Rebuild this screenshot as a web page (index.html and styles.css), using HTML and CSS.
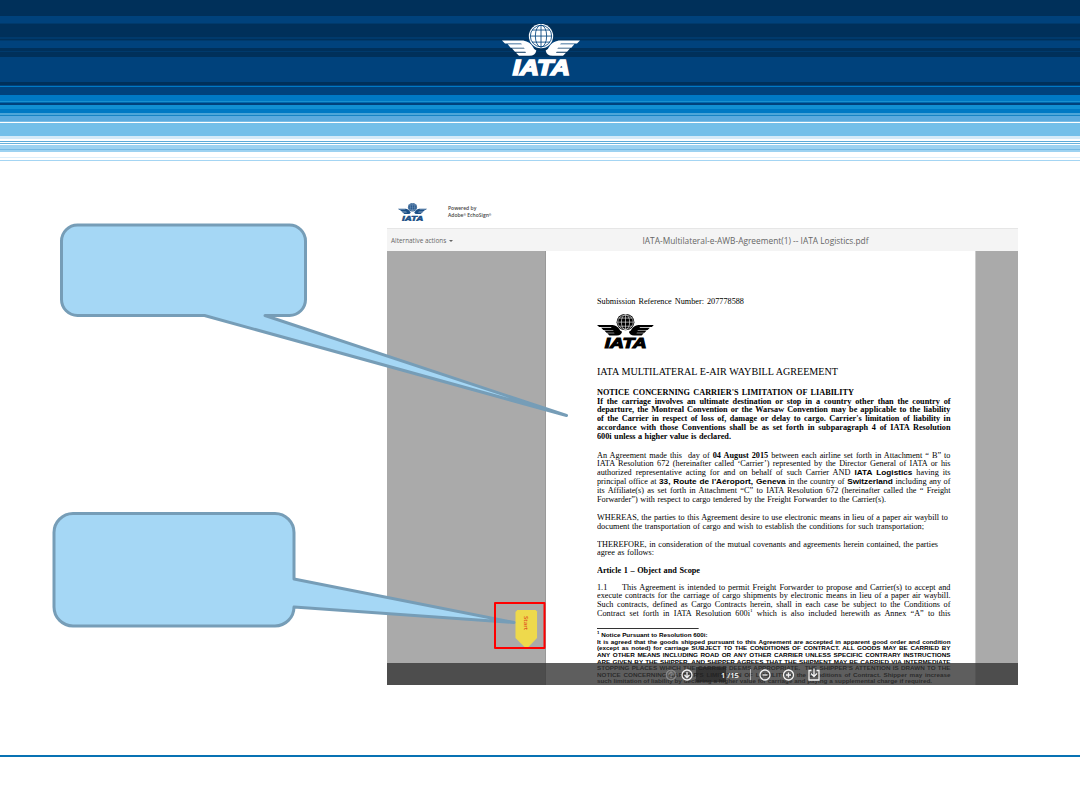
FILE: index.html
```html
<!DOCTYPE html>
<html lang="en">
<head>
<meta charset="utf-8">
<title>IATA Multilateral e-AWB Agreement</title>
<link rel="stylesheet" href="styles.css">
</head>
<body>
<svg class="defs" width="0" height="0" aria-hidden="true">
  <symbol id="iata" viewBox="36 26 234 155" preserveAspectRatio="none">
    <g fill="currentColor">
      <circle cx="153" cy="62" r="36.500"/>
      <path d="M36 75H100Q121 79 128 93Q131 101 139 105Q136 121 118 121H87L78 111.500H108L106 109H75L66 99H104L102 96.500H62L53 86.500H96L93 84H45Z"/>
      <path d="M270 75H206Q185 79 178 93Q175 101 167 105Q170 121 188 121H219L228 111.500H198L200 109H231L240 99H202L204 96.500H244L253 86.500H210L213 84H261Z"/>
      <text class="logo-word" x="68" y="177" textLength="172" lengthAdjust="spacingAndGlyphs">IATA</text>
    </g>
    <g class="globe-lines">
      <path d="M153 29V95M120 62H186M126 44H180M126 80H180"/>
      <ellipse cx="153" cy="62" rx="17" ry="33"/>
      <circle cx="153" cy="62" r="32"/>
    </g>
  </symbol>
</svg>
<div class="slide">
  <header class="banner"><svg class="banner-logo"><use href="#iata"/></svg></header>
  <main class="viewer">
    <div class="brand">
      <svg class="brand-logo"><use href="#iata"/></svg>
      <p class="powered">Powered by<br>Adobe<sup>®</sup> EchoSign<sup>®</sup></p>
    </div>
    <div class="actions">
      <span class="alt">Alternative actions <i class="caret"></i></span>
      <span class="file">IATA-Multilateral-e-AWB-Agreement(1) -- IATA Logistics.pdf</span>
    </div>
    <div class="canvas">
      <div class="page"><div class="doc">
        <p class="ref"><span class="w147">Submission Reference Number: 207778588</span></p>
        <svg class="doc-logo"><use href="#iata"/></svg>
        <p class="title"><span class="w241">IATA MULTILATERAL E-AIR WAYBILL AGREEMENT</span></p>
        <div class="para bold">
          <p class="w257">NOTICE CONCERNING CARRIER'S LIMITATION OF LIABILITY</p>
          <p>If the carriage involves an ultimate destination or stop in a country other than the country of</p>
          <p>departure, the Montreal Convention or the Warsaw Convention may be applicable to the liability</p>
          <p>of the Carrier in respect of loss of, damage or delay to cargo. Carrier's limitation of liability in</p>
          <p>accordance with those Conventions shall be as set forth in subparagraph 4 of IATA Resolution</p>
          <p class="w134">600i unless a higher value is declared.</p>
        </div>
        <div class="para">
          <p>An Agreement made this &nbsp;day of <b>04 August 2015</b> between each airline set forth in Attachment “ B” to</p>
          <p>IATA Resolution 672 (hereinafter called ‘Carrier’) represented by the Director General of IATA or his</p>
          <p>authorized representative acting for and on behalf of such Carrier AND <b class="sans">IATA Logistics</b> having its</p>
          <p>principal office at <b class="sans">33, Route de l'Aéroport, Geneva</b> in the country of <b class="sans">Switzerland</b> including any of</p>
          <p>its Affiliate(s) as set forth in Attachment “C” to IATA Resolution 672 (hereinafter called the “ Freight</p>
          <p class="w289">Forwarder”) with respect to cargo tendered by the Freight Forwarder to the Carrier(s).</p>
        </div>
        <div class="para">
          <p class="w351">WHEREAS, the parties to this Agreement desire to use electronic means in lieu of a paper air waybill to</p>
          <p class="w327">document the transportation of cargo and wish to establish the conditions for such transportation;</p>
        </div>
        <div class="para">
          <p class="w341">THEREFORE, in consideration of the mutual covenants and agreements herein contained, the parties</p>
          <p class="w57">agree as follows:</p>
        </div>
        <div class="para bold article"><p class="w103">Article 1 – Object and Scope</p></div>
        <div class="para last">
          <p class="clause"><span>1.1</span><span class="rest">This Agreement is intended to permit Freight Forwarder to propose and Carrier(s) to accept and</span></p>
          <p>execute contracts for the carriage of cargo shipments by electronic means in lieu of a paper air waybill.</p>
          <p>Such contracts, defined as Cargo Contracts herein, shall in each case be subject to the Conditions of</p>
          <p>Contract set forth in IATA Resolution 600i<sup>1</sup> which is also included herewith as Annex “A” to this</p>
        </div>
        <div class="note">
          <p class="w110"><sup>1</sup> Notice Pursuant to Resolution 600i:</p>
          <p>It is agreed that the goods shipped pursuant to this Agreement are accepted in apparent good order and condition</p>
          <p>(except as noted) for carriage SUBJECT TO THE CONDITIONS OF CONTRACT. ALL GOODS MAY BE CARRIED BY</p>
          <p>ANY OTHER MEANS INCLUDING ROAD OR ANY OTHER CARRIER UNLESS SPECIFIC CONTRARY INSTRUCTIONS</p>
          <p>ARE GIVEN BY THE SHIPPER, AND SHIPPER AGREES THAT THE SHIPMENT MAY BE CARRIED VIA INTERMEDIATE</p>
          <p>STOPPING PLACES WHICH THE CARRIER DEEMS APPROPRIATE. &nbsp;THE SHIPPER'S ATTENTION IS DRAWN TO THE</p>
          <p>NOTICE CONCERNING CARRIER'S LIMITATION OF LIABILITY in the Conditions of Contract. Shipper may increase</p>
          <p class="w335">such limitation of liability by declaring a higher value for carriage and paying a supplemental charge if required.</p>
        </div>
      </div></div>
      <div class="start">
        <svg width="23" height="38" viewBox="0 0 24 38" preserveAspectRatio="none"><path d="M2.500 0H21.500L23 1.500V28L14 37Q12 38 10 37L.5 28V2Z" fill="#eed94c"/></svg>
        <span>Start</span>
      </div>
      <div class="controls">
        <div class="page-no">1 /15</div>
        <svg width="631" height="22" viewBox="0 0 631 22" fill="none" stroke="#f2f2f2" stroke-width="1.300">
          <g opacity=".3"><circle cx="284" cy="12" r="4.800"/><path d="M284 15V9M281.500 11.500L284 9L286.500 11.500"/></g>
          <circle cx="300" cy="12" r="5"/><path d="M300 9V14.500M297.500 12L300 14.500L302.500 12"/>
          <path d="M363.500 6V17" opacity=".6" stroke-width="1"/>
          <circle cx="378" cy="12" r="5"/><path d="M375.500 12H380.500"/>
          <circle cx="401.500" cy="12" r="5"/><path d="M399 12H404M401.500 9.500V14.500"/>
          <path d="M424.500 7.500H422V17H432V7.500H429.500M427 5.500V13M424 10.500L427 13.500L430 10.500"/>
        </svg>
      </div>
    </div>
  </main>
  <div class="footer-rule"></div>
  <svg class="callouts" width="1080" height="810" viewBox="0 0 1080 810">
    <path d="M77.500 225H289.500A16 16 0 0 1 305.500 241V299.500A16 16 0 0 1 289.500 315.500H265L566.500 415.500L204.500 315.500H77.500A16 16 0 0 1 61.500 299.500V241A16 16 0 0 1 77.500 225Z"/>
    <path d="M73 513.500H275A19 19 0 0 1 294 532.500V579L514 622.500L294 607A19 19 0 0 1 275 626H73A19 19 0 0 1 54 607V532.500A19 19 0 0 1 73 513.500Z"/>
    <rect class="mark" x="495" y="603" width="49.500" height="45"/>
  </svg>
</div>
</body>
</html>
```
FILE: styles.css
```css
* { box-sizing: border-box; }
body { margin: 0; background: #fff; font-family: "Liberation Sans", Arial, sans-serif; }
p { margin: 0; }
svg { display: block; }
.defs { position: absolute; }
.slide { position: relative; width: 1080px; height: 810px; overflow: hidden; background: #fff; }
.banner {
  height: 162px; padding: 24px 0 0 502px; color: #fff; --globe: #00427c;
  background: linear-gradient(#00305a 0 16px, #00427c 16px 23px, #003a6c 23px 24px, #00305a 24px 37px, #003a6c 37px 39px, #00305a 39px 40px, #003a6c 40px 41px, #00427c 41px 48px, #00305a 48px 51px, #003a6c 51px 52px, #00305a 52px 57px, #00427c 57px 82px, #00305a 82px 85px, #00427c 85px 86px, #0079c4 86px 87px, #00427c 87px 95px, #0079c4 95px 101px, #1a91cf 101px 102px, #0067ad 102px 103px, #00427c 103px 105px, #118fd2 105px 109px, #0079c4 109px 113px, #4da6d9 113px 115px, #1683c4 115px 116px, #5baade 116px 121px, #79bde6 121px 122px, #fff 122px 123px, #73bfe9 123px 136px, #d4eaf8 136px 139px, #fff 139px 141px, #5daad7 141px 142px, #fff 142px 143px, #68b2dd 143px 144px, #fff 144px 145px, #9dd2f1 145px 149px, #76b9e3 149px 150px, #9dd2f1 150px 152px, #fff 152px 157px, #dceefa 157px 158px, #fff 158px 160px, #a4d5f3 160px 161px, #fff 161px);
}
.banner-logo { width: 78px; height: 52px; }
.logo-word { font: italic bold 67px "Liberation Sans", Arial, sans-serif; stroke: currentColor; stroke-width: 5px; }
.globe-lines { fill: none; stroke: var(--globe); stroke-width: 2.5px; }

.viewer { margin: 33px 0 0 387px; width: 631px; }
.brand { height: 33px; display: flex; padding: 8px 0 0 11px; color: #1b4f87; --globe: #b5c9dc; }
.brand-logo { width: 29px; height: 18px; }
.powered { margin: 2px 0 0 21px; font: 600 5px/6.500px "Open Sans", sans-serif; color: #444; }
.powered sup { font-size: 3px; line-height: 0; vertical-align: 1.5px; }
.actions { height: 23px; background: #f4f4f4; border-top: 1px solid #e6e6e6; display: flex; align-items: center; padding-left: 4px; color: #666; font: 6.400px "Open Sans", sans-serif; }
.alt { width: 251.500px; flex: none; padding-top: 1px; }
.caret { display: inline-block; margin: 0 0 1px 1px; border: 2px solid transparent; border-top-color: #666; border-bottom: 0; }
.file { font-size: 8.350px; padding-top: 1px; white-space: nowrap; }
.canvas { position: relative; height: 434px; background: #aaa; overflow: hidden; }
.page { margin-left: 158px; width: 431px; height: 434px; padding: 47px 0 0 50.500px; background: #fff; border-left: 1px solid #999; border-right: 1px solid #ccc; overflow: hidden; }
.doc { width: calc(353.500px / 1.07); transform: scaleX(1.07); transform-origin: 0 0; color: #000; --globe: #fff; font: 7.700px/8.850px "Liberation Serif", "Times New Roman", serif; }
.doc p { text-align: justify; text-align-last: justify; white-space: nowrap; height: 8.850px; }
.ref span, .title span { display: block; }
.doc-logo { width: calc(57px / 1.07); height: 35px; margin: 7px 0 19px; }
.doc .title { font-size: 9.450px; margin-bottom: 12px; }
.para { margin-bottom: 9.100px; }
.para.bold { margin-bottom: 9.900px; }
.para.article { margin-bottom: 7.300px; }
.bold { font-weight: bold; }
.sans { font-family: "Liberation Sans", Arial, sans-serif; }
.doc sup { font-size: 5px; line-height: 0; }
.clause { display: flex; justify-content: space-between; }
.rest { width: calc(328.500px / 1.07); }
.doc .last { margin-bottom: 0; }
.note { margin-top: 9.200px; padding-top: 4.200px; font: bold 5.900px/6.600px "Liberation Sans", Arial, sans-serif; background: linear-gradient(#333, #333) 0 0 / 95px 1px no-repeat; }
.doc .note p { height: 6.600px; }
.doc .note sup { font-size: 4px; }
.w57 { width: calc(57px / 1.07); }
.w103 { width: calc(103px / 1.07); }
.w110 { width: calc(110px / 1.07); }
.w134 { width: calc(134px / 1.07); }
.w147 { width: calc(147px / 1.07); }
.w241 { width: calc(241px / 1.07); }
.w257 { width: calc(257px / 1.07); }
.w289 { width: calc(289px / 1.07); }
.w327 { width: calc(327px / 1.07); }
.w335 { width: calc(335px / 1.07); }
.w341 { width: calc(341px / 1.07); }
.w351 { width: calc(351px / 1.07); }

.start { position: absolute; left: 128px; top: 359px; }
.start span { position: absolute; left: 6px; top: 6px; writing-mode: vertical-rl; font: 600 6px/9px "Open Sans", sans-serif; color: #e0521f; }
.controls { position: absolute; left: 0; bottom: 0; width: 631px; height: 22px; background: rgba(54, 54, 54, .8); }
.page-no { position: absolute; left: 309px; top: 4px; width: 46px; height: 15px; padding-left: 25px; background: linear-gradient(90deg, rgba(30, 30, 30, .65) 30px, transparent 30px); color: #fff; font: 600 7.500px/16px "Open Sans", sans-serif; white-space: nowrap; }
.footer-rule { margin-top: 70px; height: 2px; background: #0872b3; }
.callouts { position: absolute; left: 0; top: 0; fill: #a5d7f5; stroke: #769db7; stroke-width: 3px; stroke-linejoin: round; }
.callouts .mark { fill: none; stroke: #f00; stroke-width: 2px; }
```
